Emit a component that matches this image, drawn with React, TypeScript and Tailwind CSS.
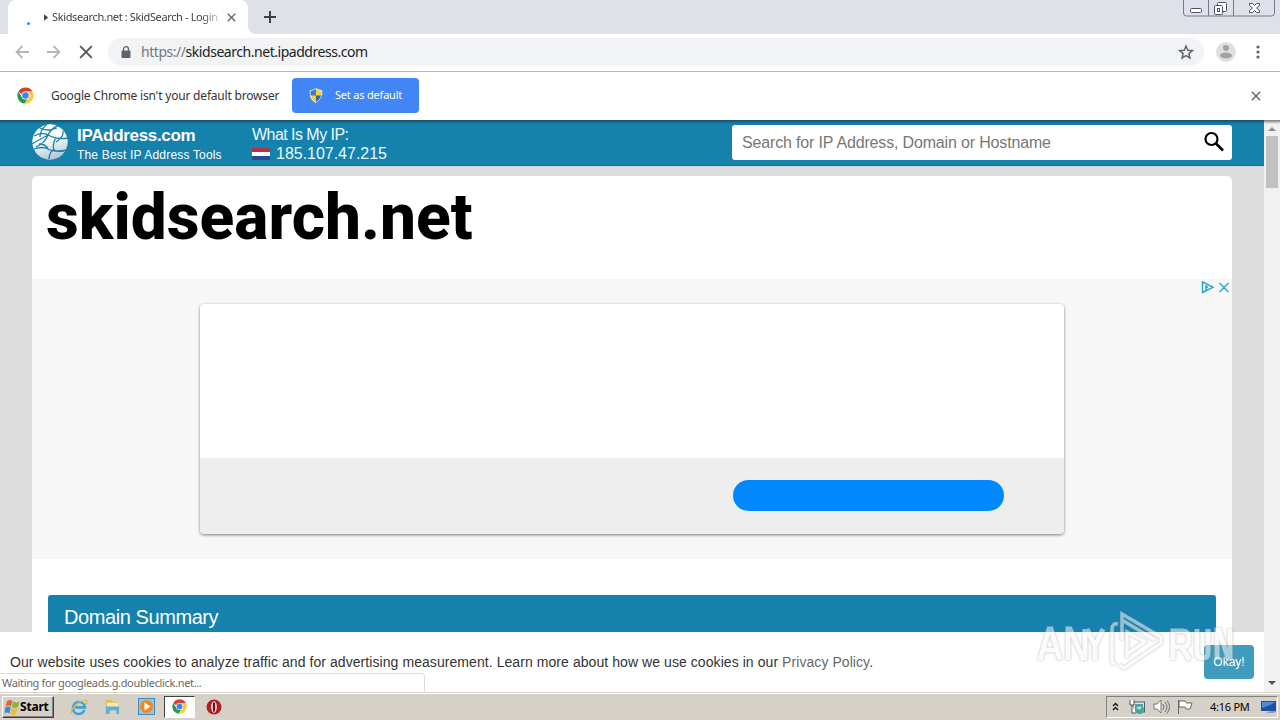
import React from "react";

const ui = "font-['Noto_Sans',sans-serif]";

function ChromeLogo({ className }: { className: string }) {
  return (
    <svg viewBox="0 0 48 48" className={className}>
      <circle cx="24" cy="24" r="23" fill="#fff" />
      <path d="M4.1 12.5A23 23 0 0 1 44 13H24a11 11 0 0 0-10.4 7.5z" fill="#dc3d30" />
      <path d="M4.1 12.5A23 23 0 0 0 21.5 46.9L32 30.5A11 11 0 0 1 14 29z" fill="#249b55" />
      <path d="M44 13A23 23 0 0 1 21.5 46.9L33 30a11 11 0 0 0-1-14.5L30 13z" fill="#fbcb3b" />
      <circle cx="24" cy="24" r="11" fill="#fff" />
      <circle cx="24" cy="24" r="9.4" fill="#4285e8" />
    </svg>
  );
}

function Cross({ className }: { className: string }) {
  return (
    <svg viewBox="0 0 12 12" className={className} fill="none" stroke="currentColor" strokeWidth="1.700">
      <path d="M1 1l10 10M11 1L1 11" />
    </svg>
  );
}

function TabStrip() {
  return (
    <div className="relative flex h-[34px] shrink-0 bg-[#dee1e8] pl-2">
      <div className="flex w-[240px] items-center rounded-t-lg bg-white">
        <div className="mt-3 ml-[19px] size-[3px] rounded-full bg-[#3b86c8]" />
        <svg viewBox="0 0 6 8" className="ml-[14px] h-[7px] w-[5px]" fill="#444">
          <path d="M0 0l5 4-5 4z" />
        </svg>
        <div className="ml-[3px] w-[169px] whitespace-nowrap text-[11px] tracking-[-0.37px] text-[#3c4043] [mask-image:linear-gradient(to_right,#000_150px,transparent_172px)]">
          Skidsearch.net : SkidSearch - Login
        </div>
        <Cross className="ml-[6px] size-[9px] text-[#5f6368]" />
      </div>
      <svg viewBox="0 0 8 8" className="mt-auto size-2" fill="#fff">
        <path d="M0 0v8h8A8 8 0 0 1 0 0" />
      </svg>
      <svg viewBox="0 0 12 12" className="mt-[11px] ml-2 size-3" stroke="#3c4043" strokeWidth="2">
        <path d="M6 0v12M0 6h12" />
      </svg>
      <svg viewBox="0 0 94 18" className="ml-auto mr-[4px] h-[18px] w-[94px]" fill="none" stroke="#737b8c">
        <path d="M1.500 0v13q0 3 3 3h85q3 0 3-3V0M26.500 0v16M51.500 0v16" />
        <rect x="8.500" y="8.500" width="11" height="4" rx="1" fill="#fff" stroke="#4c5468" />
        <rect x="35.500" y="2.500" width="9" height="9" rx="1" fill="#fff" stroke="#4c5468" />
        <rect x="32.500" y="5.500" width="8" height="9" rx="1" fill="#fff" stroke="#4c5468" />
        <rect x="35.500" y="8.500" width="2" height="3" stroke="#4c5468" />
        <path d="M67.500 3.500h3l2 2 2-2h3v2l-3 2.500 3 2.500v2h-3l-2-2-2 2h-3v-2l3-2.500-3-2.500z" fill="#fff" stroke="#4c5468" />
      </svg>
    </div>
  );
}

function Toolbar() {
  return (
    <div className="flex h-[38px] shrink-0 items-center border-b border-[#b4b6b8] bg-white pb-[2px]">
      <svg viewBox="0 0 14 14" className="ml-[15px] size-[14px]" fill="none" stroke="#b5b7ba" strokeWidth="1.800">
        <path d="M14 7H1.500M7.500 1L1.500 7l6 6" />
      </svg>
      <svg viewBox="0 0 14 14" className="ml-[18px] size-[14px]" fill="none" stroke="#b5b7ba" strokeWidth="1.800">
        <path d="M0 7h12.500M6.500 1l6 6-6 6" />
      </svg>
      <Cross className="ml-[18px] size-[14px] text-[#55585c]" />
      <div className="ml-[15px] flex h-7 w-[1096px] items-center rounded-full bg-[#f1f3f5]">
        <svg viewBox="0 0 10 12" className="ml-[13px] h-3 w-[10px]" fill="#5f6368">
          <rect x="0.500" y="4.500" width="9" height="7.500" rx="1" />
          <path d="M2.500 5V3.200a2.500 2.500 0 0 1 5 0V5" fill="none" stroke="#5f6368" strokeWidth="1.300" />
        </svg>
        <div className="ml-[10px] whitespace-nowrap text-[14px] tracking-[-0.46px] text-[#202124]">
          <span className="text-[#74787c]">https://</span>skidsearch.net.ipaddress.com
        </div>
        <svg viewBox="0 0 24 24" className="ml-auto mr-[10px] size-4" fill="none" stroke="#5f6368" strokeWidth="2.200">
          <path d="M12 3l2.700 6.300 6.800.6-5.200 4.500 1.600 6.700-5.900-3.600-5.900 3.600 1.600-6.700-5.200-4.500 6.800-.6z" />
        </svg>
      </div>
      <svg viewBox="0 0 20 20" className="ml-3 size-5">
        <circle cx="10" cy="10" r="10" fill="#e0e0e0" />
        <circle cx="10" cy="6" r="3" fill="#a0a1a3" />
        <ellipse cx="10" cy="13.500" rx="6" ry="3" fill="#a0a1a3" />
      </svg>
      <svg viewBox="0 0 4 14" className="ml-5 h-[14px] w-1" fill="#5f6368">
        <circle cx="2" cy="2" r="1.600" />
        <circle cx="2" cy="7" r="1.600" />
        <circle cx="2" cy="12" r="1.600" />
      </svg>
    </div>
  );
}

function InfoBar() {
  return (
    <div className="flex h-12 shrink-0 items-center bg-white pb-px">
      <ChromeLogo className="ml-[17px] size-[17px]" />
      <div className="ml-[17px] w-[241px] whitespace-nowrap text-[12px] tracking-[-0.19px] text-[#333]">
        Google Chrome isn't your default browser
      </div>
      <div className="flex h-[35px] w-[127px] items-center rounded bg-[#4285f4]">
        <svg viewBox="0 0 14 16" className="ml-[17px] h-[15px] w-[14px]">
          <path d="M7 0Q4 2 .5 2.500 0 12 7 16V0" fill="#3f7bc4" />
          <path d="M7 0q3 2 6.500 2.500Q14 12 7 16V0" fill="#f3cf3a" />
          <path d="M.4 8H7v8Q1 13 .4 8" fill="#f3cf3a" />
          <path d="M7 8h6.600Q13 13 7 16z" fill="#2f66b5" />
          <path d="M7 .6Q4 2.500.7 2.800.2 12 7 15.400 13.800 12 13.300 2.800 10 2.500 7 .6z" fill="none" stroke="#dbe3e6" />
        </svg>
        <span className="ml-[12px] whitespace-nowrap text-[11px] tracking-[-0.2px] text-white">Set as default</span>
      </div>
      <Cross className="ml-auto mr-[19px] size-[10px] text-[#5f6368]" />
    </div>
  );
}

function Globe() {
  return (
    <svg viewBox="0 0 36 36" className="size-9">
      <defs>
        <linearGradient id="globe" x1="0" y1="0" x2="0.3" y2="1">
          <stop offset="0.5" stopColor="#fff" />
          <stop offset="1" stopColor="#b9cbd8" />
        </linearGradient>
      </defs>
      <circle cx="18" cy="18" r="17.700" fill="url(#globe)" />
      <g fill="none" stroke="#1781ab" strokeWidth="1.300">
        <path d="M2 12q8-4 14-1 9 5 20 3M8 4q7 4 17 0M15 0Q8 6 8 13M16 11Q5 17 0 20M16 11q-3 8-12 12M16 11q4-8 12-10M24 13q-4 8-2 13 4 2 13 0M2 25q9-3 14 0t16 2M31 7q1 6-7 11M22 25q-5 4-5 10M16 25q-2-5-9-5" />
      </g>
    </svg>
  );
}

function SiteHeader() {
  return (
    <header className="flex h-[46px] shrink-0 border-b border-[#11718f] bg-[#1581ad] bg-[linear-gradient(#1b4f62,#1581ad_4px)] pl-8 text-white">
      <div className="mt-1"><Globe /></div>
      <div className="ml-[9px] w-[175px] whitespace-nowrap">
        <div className="mt-[6px] h-5 text-[17px]/5 font-bold tracking-[-0.32px]">IPAddress.com</div>
        <div className="text-[12px]/[18px] tracking-[0.18px]">The Best IP Address Tools</div>
      </div>
      <div className="w-[200px] whitespace-nowrap text-[16px]/[19px] text-[#eafaff]">
        <div className="mt-[5px] tracking-[-0.54px]">What Is My IP:</div>
        <div className="flex items-center">
          <div className="mr-[6px] flex h-3 w-[18px] flex-col">
            <div className="flex-1 bg-[#bb3040]" />
            <div className="flex-1 bg-white" />
            <div className="flex-1 bg-[#254c95]" />
          </div>
          <span className="tracking-[-0.02px]">185.107.47.215</span>
        </div>
      </div>
      <div className="mt-[5px] mr-8 ml-auto flex h-[35px] w-[500px] items-center rounded-[3px] bg-white pr-[7px] pl-[10px]">
        <span className="whitespace-nowrap text-[16px] tracking-[-0.16px] text-[#777]">Search for IP Address, Domain or Hostname</span>
        <svg viewBox="0 0 22 22" className="ml-auto mb-px size-[22px]" fill="none" stroke="#000">
          <circle cx="8.500" cy="8" r="6" strokeWidth="2.200" />
          <path d="M13 12.500l7 7" strokeWidth="2.600" />
        </svg>
      </div>
    </header>
  );
}

function Advert() {
  return (
    <section className="relative flex h-[280px] justify-center bg-[#f7f7f7] pt-[25px]">
      <div className="flex h-[230px] w-[864px] flex-col overflow-hidden rounded bg-white shadow-[0_1px_3px_rgba(0,0,0,0.5)]">
        <div className="h-[154px]" />
        <div className="flex flex-1 justify-end bg-[#eee] pt-[22px] pr-[60px]">
          <div className="h-[31px] w-[271px] rounded-full bg-[#08f]" />
        </div>
      </div>
      <svg viewBox="0 0 30 14" className="absolute top-[1px] right-[1px] h-[14px] w-[30px]" fill="none" stroke="#1fa9c9" strokeWidth="1.400">
        <path d="M1.500 2v10.500l10.500-5.200zM5 5v5.500M5 6.500l2 .8M18.500 3l9 9M27.500 3l-9 9" />
      </svg>
    </section>
  );
}

function ScrollBar() {
  return (
    <div className="flex w-4 shrink-0 flex-col items-center bg-[#f1f1f1] bg-[linear-gradient(#777,#f1f1f1_4px)]">
      <svg viewBox="0 0 8 4" className="mt-[7px] h-1 w-2" fill="#8b8b8b"><path d="M4 0l4 4H0z" /></svg>
      <div className="mt-[5px] h-[52px] w-3 bg-[#c1c1c1]" />
      <svg viewBox="0 0 8 4" className="mt-auto mb-[7px] h-1 w-2" fill="#505050"><path d="M0 0h8L4 4z" /></svg>
    </div>
  );
}

function Watermark() {
  return (
    <svg viewBox="0 0 204 76" className="absolute top-[606px] left-[1034px] h-[76px] w-[204px] opacity-55 drop-shadow-[0_0_1px_#777]" fill="none" stroke="#f8f8f8" strokeWidth="5">
      <path d="M6 54l9-31h2l9 31M9 44h14M34 54V23h2l13 29h2V23M53 23l8 17 8-17M61 40v14M139 54V25h10q6 0 6 8t-6 8h-10M148 42l8 12M163 23v24q0 5 5.500 5t5.500-5V23M183 54V24h2l9 28h2V23" />
      <path d="M84 18q-6-1-6 5v32q0 3 4 2M88 34V8l39 23v6L90 62l-5-3M88 14l33 20M93 52V26l18 10-18 12" strokeWidth="3.500" />
    </svg>
  );
}

function Taskbar() {
  return (
    <footer className="flex h-7 shrink-0 items-center border-t border-[#d7d3cb] bg-[#d5d0c8] shadow-[inset_0_1px_0_#fff]">
      <div className="mt-px ml-[2px] flex h-[22px] w-[52px] items-center border border-t-white border-r-[#404040] border-b-[#404040] border-l-white shadow-[inset_-1px_-1px_0_#808080]">
        <svg viewBox="0 0 16 16" className="ml-[1px] size-4 shrink-0">
          <path d="M3 2q3-2 5.500 0L7 7.500q-2.500-2-5.500 0z" fill="#ec6430" />
          <path d="M9.300 2.500q3 2 6.200 0L14 8q-3 2-6.200 0z" fill="#83b93b" />
          <path d="M1.300 8.500q3-2 5.500 0l-1.500 6q-2.500-2-5 0z" fill="#388bd7" />
          <path d="M7.500 9q3 2 6.200 0l-1.500 6q-3 2-6.200 0z" fill="#f4bb32" />
        </svg>
        <span className="text-[12px] font-bold tracking-[-0.2px] text-black">Start</span>
      </div>
      <svg viewBox="0 0 18 18" className="ml-[16px] size-[18px]" fill="none">
        <path d="M14.500 12q-2 4-6 4a6 6 0 1 1 6.400-6.600H5" stroke="#3ba4df" strokeWidth="2.600" />
        <path d="M2 16q-3-2 3-8t11-6q2 1 0 4" stroke="#e4b83b" strokeWidth="1.200" />
      </svg>
      <svg viewBox="0 0 18 18" className="ml-4 size-[17px]">
        <path d="M2 2h6l1 2h6v8H2z" fill="#e0bd50" />
        <path d="M3 5h12v5H3z" fill="#faeba8" />
        <path d="M2 9h14v8h-3v-4H6v4H2z" fill="#62aedb" />
      </svg>
      <svg viewBox="0 0 17 17" className="ml-[17px] size-[17px]">
        <rect x="0.500" y="0.500" width="16" height="16" fill="#8fc5ec" stroke="#4588bd" />
        <circle cx="8.500" cy="8.500" r="6.500" fill="#f18a18" />
        <path d="M6.500 4.500l6 4-6 4z" fill="#fff" />
      </svg>
      <div className="ml-[9px] flex h-[22px] w-[31px] items-center justify-center border border-t-[#404040] border-r-white border-b-white border-l-[#404040] bg-white">
        <ChromeLogo className="size-[15px]" />
      </div>
      <svg viewBox="0 0 16 16" className="ml-[11px] size-4">
        <circle cx="8" cy="8" r="7.500" fill="#b51d20" />
        <ellipse cx="8" cy="8" rx="2.800" ry="5.700" fill="#fff" />
        <ellipse cx="8" cy="8" rx="1.300" ry="5" fill="#6d1116" />
      </svg>
      <div className="mt-px mr-[2px] ml-auto flex h-[22px] w-[172px] items-center border border-t-[#808080] border-r-white border-b-white border-l-[#808080]">
        <svg viewBox="0 0 7 9" className="mb-[2px] ml-[5px] h-[9px] w-[7px]" fill="none" stroke="#111" strokeWidth="1.300">
          <path d="M1 4l2.500-2.500L6 4M1 8l2.500-2.500L6 8" />
        </svg>
        <svg viewBox="0 0 16 16" className="ml-[10px] size-4">
          <rect x="4" y="3" width="11.500" height="10" fill="#d8e8ea" stroke="#48636c" />
          <path d="M6 5h8v6H6z" fill="#5a9fb0" />
          <path d="M1 1v5h4V1M3 6v8h4" fill="#fff" stroke="#555" />
          <circle cx="10.500" cy="10.500" r="4.500" fill="#45a39b" />
          <path d="M7 9q3-3 6-1l-2 3z" fill="#a8ddc3" />
        </svg>
        <svg viewBox="0 0 17 16" className="ml-2 h-4 w-[17px]" fill="none" stroke="#777">
          <path d="M1 5h3l4-4v13l-4-4H1z" fill="#fff" />
          <path d="M10 5q2 3 0 6M12 3q4 5 0 10M14 1.500q5 6 0 13" />
        </svg>
        <svg viewBox="0 0 16 16" className="ml-[7px] size-4" fill="#fff" stroke="#666">
          <path d="M1.500 1v14M2 2h6l1.500 2H15l-2 6H9l-1-2H2z" />
        </svg>
        <span className="ml-[17px] w-[45px] whitespace-nowrap text-[11px] tracking-[-0.25px] text-black">4:16 PM</span>
        <svg viewBox="0 0 16 14" className="ml-[6px] h-[14px] w-4">
          <path d="M0 1h15v10H0z" fill="#20509f" />
          <path d="M1 2h13q-5 4-13 6z" fill="#4b8bd8" />
          <path d="M5 13h8l3-2H9z" fill="#8c9db7" />
        </svg>
      </div>
    </footer>
  );
}

export default function App() {
  return (
    <div className={`${ui} relative flex h-[720px] w-[1280px] flex-col overflow-hidden bg-white`}>
      <TabStrip />
      <Toolbar />
      <InfoBar />
      <div className="relative flex h-[572px] shrink-0">
        <div className="flex w-[1264px] flex-col overflow-hidden bg-[#dcdcdc] font-['Liberation_Sans',sans-serif]">
          <SiteHeader />
          <main className="mx-8 mt-[10px] flex h-[456px] shrink-0 flex-col overflow-hidden rounded-t-[5px] bg-white">
            <h1 className="h-[103px] shrink-0 pt-[2px] pl-[14px] font-['Roboto',sans-serif] text-[64px]/[80px] font-extrabold whitespace-nowrap text-black">
              skidsearch.net
            </h1>
            <Advert />
            <div className="mx-4 mt-9 h-[37px] rounded-t-[3px] border border-b-0 border-[#1e7fa5] bg-[#1581ad] pl-[15px] text-[20px]/[43px] tracking-[-0.42px] text-white">
              Domain Summary
            </div>
          </main>
          <div className="flex h-[60px] shrink-0 items-center justify-between bg-white pr-[10px] pl-[10px] text-[14px] text-[#333]">
            <p className="whitespace-nowrap tracking-[0.068px]">
              Our website uses cookies to analyze traffic and for advertising measurement. Learn more about how we use cookies in our <span className="text-[#666]">Privacy Policy</span>.
            </p>
            <button className="h-[34px] w-[50px] rounded bg-[#419bbe] text-[12px] text-white">Okay!</button>
          </div>
        </div>
        <ScrollBar />
        <div className="absolute bottom-0 left-0 h-[19px] w-[425px] rounded-tr border-t border-r border-[#ddd] bg-white pl-[2px] text-[11px]/[18px] tracking-[-0.34px] text-[#686868]">
          Waiting for googleads.g.doubleclick.net...
        </div>
      </div>
      <Taskbar />
      <Watermark />
    </div>
  );
}
